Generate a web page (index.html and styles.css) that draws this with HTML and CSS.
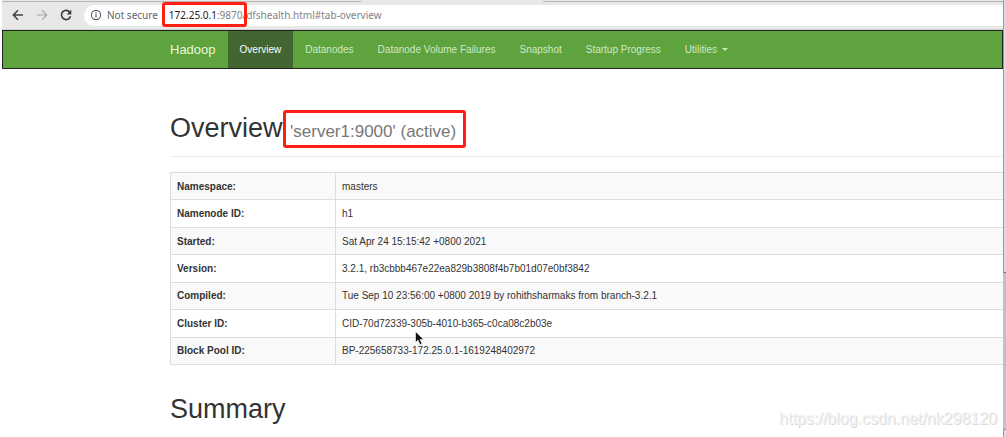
FILE: index.html
```html
<!DOCTYPE html>
<html lang="en">
<head>
<meta charset="utf-8">
<title>Namenode information</title>
<link rel="stylesheet" href="styles.css">
</head>
<body>
<div class="screen">
  <div class="window">
    <div class="tabstrip"><span class="tab-edge tab-left"></span><span class="tab-edge tab-right"></span></div>
    <div class="toolbar">
      <button class="tool" aria-label="Back"><svg viewBox="0 0 12 12"><path d="M11 6H1.5M6 1.3L1.3 6L6 10.7" fill="none" stroke="#3c4043" stroke-width="1.5"/></svg></button>
      <button class="tool" aria-label="Forward"><svg viewBox="0 0 12 12"><path d="M1 6H10.5M6 1.3L10.7 6L6 10.7" fill="none" stroke="#a4a6a6" stroke-width="1.2"/></svg></button>
      <button class="tool" aria-label="Reload"><svg viewBox="0 0 12 12"><path d="M9.8 3.2A4.6 4.6 0 1 0 10.5 7.2" fill="none" stroke="#3c4043" stroke-width="1.7"/><path d="M11.3 .8V5.4H6.7Z" fill="#3c4043"/></svg></button>
      <div class="address">
        <svg class="info" viewBox="0 0 12 12"><circle cx="6" cy="6" r="4.6" fill="none" stroke="#55585c" stroke-width="1.1"/><path d="M6 5.3V8.6M6 3.3V4.5" stroke="#55585c" stroke-width="1.2"/></svg>
        <span class="secure">Not secure</span>
        <span class="divider"></span>
        <span class="url"><span class="origin"><span class="host">172.25.0.1</span>:9870<span class="mark mark-url"></span></span>/dfshealth.html#tab-overview</span>
      </div>
    </div>
    <nav class="navbar">
      <a class="brand" href="#">Hadoop</a>
      <a class="link active" href="#tab-overview">Overview</a>
      <a class="link" href="#tab-datanode">Datanodes</a>
      <a class="link" href="#tab-datanode-volume-failures">Datanode Volume Failures</a>
      <a class="link" href="#tab-snapshot">Snapshot</a>
      <a class="link" href="#tab-startup-progress">Startup Progress</a>
      <a class="link" href="#utilities">Utilities <span class="caret"></span></a>
    </nav>
    <main class="content">
      <h1 class="page-header">Overview <small class="server">'server1:9000' (active)<span class="mark mark-server"></span></small></h1>
      <table class="info-table">
        <tbody>
          <tr><th scope="row">Namespace:</th><td>masters</td></tr>
          <tr><th scope="row">Namenode ID:</th><td>h1</td></tr>
          <tr><th scope="row">Started:</th><td>Sat Apr 24 15:15:42 +0800 2021</td></tr>
          <tr><th scope="row">Version:</th><td>3.2.1, rb3cbbb467e22ea829b3808f4b7b01d07e0bf3842</td></tr>
          <tr><th scope="row">Compiled:</th><td>Tue Sep 10 23:56:00 +0800 2019 by rohithsharmaks from branch-3.2.1</td></tr>
          <tr><th scope="row">Cluster ID:</th><td>CID-70d72339-305b-4010-b365-c0ca08c2b03e</td></tr>
          <tr><th scope="row">Block Pool ID:</th><td>BP-225658733-172.25.0.1-1619248402972</td></tr>
        </tbody>
      </table>
      <h1 class="summary">Summary</h1>
    </main>
  </div>
  <div class="scrollbar"><span class="thumb"></span><span class="track"></span><span class="stepper"></span></div>
  <svg class="pointer" viewBox="0 0 10 16"><path d="M.5 .5V11.5L3 9.2L5 13.8L7 12.9L5 8.5H8.6Z" fill="#111" stroke="#fff" stroke-width=".6"/></svg>
  <span class="watermark">https://blog.csdn.net/nk298120</span>
</div>
</body>
</html>
```
FILE: styles.css
```css
* { box-sizing: border-box; }
body {
  margin: 0;
  background: #fff;
  color: #333;
  font: 10px/15px "Liberation Sans", Arial, sans-serif;
}
.screen {
  position: relative;
  display: flex;
  height: 100vh;
  overflow: hidden;
}
.window {
  flex: 1;
  min-width: 0;
  padding-left: 2px;
}
.tabstrip {
  display: flex;
  justify-content: space-between;
  height: 2px;
  background: #e8e8e7;
}
.tab-edge { border-bottom: 1px solid #b4b5b4; }
.tab-left { width: 36%; border-bottom-right-radius: 3px; }
.tab-right { width: 46%; border-bottom-left-radius: 3px; }
.toolbar {
  display: flex;
  align-items: center;
  height: 28px;
  padding: 3px 0 4px 10px;
  background: #e8e8e7;
  border-bottom: 1px solid #d2d2d2;
}
.tool {
  width: 12px;
  height: 12px;
  margin-right: 12px;
  padding: 0;
  border: 0;
  background: none;
}
.tool svg { display: block; width: 12px; height: 12px; }
.address {
  display: flex;
  flex: 1;
  align-items: center;
  height: 21px;
  padding-left: 6px;
  background: #fff;
  border-radius: 11px 0 0 11px;
  color: #808386;
  font-family: "Noto Sans", sans-serif;
  white-space: nowrap;
}
.info { width: 12px; height: 12px; margin-right: 5px; }
.secure { color: #5f6368; }
.divider { width: 1px; height: 11px; margin: 0 5px; background: #ddd; }
.origin { position: relative; }
.host { color: #222; }
.mark {
  position: absolute;
  border: 3px solid #fc2013;
  border-radius: 3px;
}
.mark-url { inset: -6px -4px -5px -7px; }
.navbar {
  display: flex;
  align-items: stretch;
  min-height: 39px;
  padding-left: 155px;
  background: #5fa33e;
  border: 1px solid #222;
}
.navbar a {
  display: flex;
  align-items: center;
  padding: 0 12px;
  color: #cfe8c2;
  text-decoration: none;
  white-space: nowrap;
}
.navbar .brand { color: #e8f8df; font-size: 13px; }
.navbar .active { background: #436532; color: #fff; }
.caret {
  margin-left: 5px;
  border: 3px solid transparent;
  border-top-color: currentColor;
  border-bottom: 0;
}
.content { padding-left: 168px; }
h1 { font-size: 27px; line-height: 30px; font-weight: 400; }
.page-header {
  margin: 44px 0 15px;
  padding-bottom: 13px;
  border-bottom: 1px solid #eee;
}
.server { position: relative; color: #777; font-size: 17px; line-height: 17px; }
.mark-server { inset: -12px -10px -7px -7px; }
.info-table {
  width: 100%;
  height: 193px;
  border-collapse: collapse;
  border: 1px solid #ddd;
  border-right: 0;
}
.info-table th, .info-table td {
  padding: 5px 6px;
  border: 1px solid #ddd;
  text-align: left;
}
.info-table td { border-right: 0; }
.info-table th { width: 165px; }
.info-table tr:nth-child(odd) { background: #f9f9f9; }
.summary { margin: 29px 0 0; }
.scrollbar {
  display: flex;
  flex-direction: column;
  width: 3px;
}
.thumb { flex: 273; background: #dcdcdc; border-left: 1px solid #999; border-bottom: 1px solid #777; }
.track { flex: 157; background: #c1c1c1; }
.stepper { flex: 7; background: #dcdcdc; border: 1px solid #999; border-width: 1px 0 0 1px; }
.pointer {
  position: absolute;
  left: 415px;
  top: 331px;
  width: 10px;
  height: 16px;
}
.watermark {
  position: absolute;
  right: 9px;
  bottom: 8px;
  color: #f2f2f2;
  font-size: 16px;
  line-height: 20px;
  text-shadow: 1px 1px 0 #dcdcdc;
}
```
